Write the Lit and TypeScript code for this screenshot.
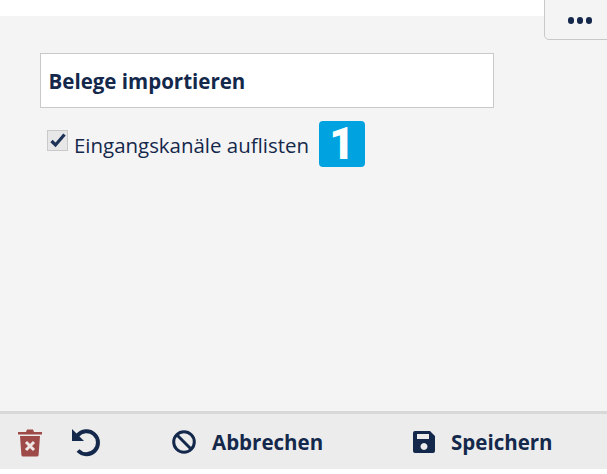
import { LitElement, html, css } from "lit";
import { customElement } from "lit/decorators.js";

@customElement("app-root")
export class AppRoot extends LitElement {
  static styles = css`
    :host {
      display: flex;
      flex-direction: column;
      width: 607px;
      height: 474px;
      overflow: hidden;
      background: #fff;
      font-family: "Open Sans", "Noto Sans", sans-serif;
      color: #14284b;
      position: relative;
    }
    .top { height: 16px; flex: none; background: #fff; }
    .main {
      flex: 1;
      background: #f4f4f4;
      padding: 37px 0 0 40px;
      display: flex;
      flex-direction: column;
      align-items: flex-start;
    }
    .more {
      position: absolute;
      top: -6px;
      left: 543.5px;
      width: 70px;
      height: 46px;
      box-sizing: border-box;
      border: 1.5px solid #c8c8c8;
      border-radius: 5px;
      background: #f4f4f4;
      display: flex;
      align-items: center;
      gap: 2.5px;
      padding-top: 7px;
      padding-left: 23px;
    }
    .more i { width: 6.500px; height: 6.500px; border-radius: 50%; background: #14284b; }
    .title {
      box-sizing: border-box;
      width: 454px;
      height: 55px;
      background: #fff;
      border: 1.5px solid #c9c9c9;
      padding-left: 7.5px;
      padding-top: 1px;
      display: flex;
      align-items: center;
      font-size: 20.500px;
      font-weight: 700;
    }
    .row {
      display: flex;
      align-items: center;
      margin-top: 13px;
      margin-left: 7px;
      height: 46px;
    }
    .check {
      box-sizing: border-box;
      width: 21px;
      height: 21px;
      background: #e7e7e7;
      border: 1.5px solid #c9c9c9;
      display: flex;
      align-items: center;
      justify-content: center;
      margin-top: -8px;
    }
    .check svg { width: 16px; height: 16px; }
    .label { margin-left: 6px; padding-top: 2px; font-size: 20.450px; }
    .badge {
      margin-left: 10px;
      width: 46px;
      height: 46px;
      border-radius: 4px;
      background: #00a2e0;
      color: #fff;
      font-family: Roboto, "Liberation Sans", sans-serif;
      font-weight: 900;
      font-size: 44px;
      line-height: 46px;
      text-align: center;
    }
    .footer {
      flex: none;
      height: 58px;
      margin-bottom: 5px;
      box-sizing: border-box;
      background: #ececec;
      border-top: 3px solid #d8d8d8;
      display: grid;
      grid-template-columns: 54px 93px 240px auto;
      align-items: center;
      padding-left: 17px;
    }
    .btn {
      display: flex;
      align-items: center;
      font-size: 20.500px;
      font-weight: 700;
    }
    .btn.cancel { margin-left: 8px; gap: 16px; }
    .btn.save { margin-left: 8px; gap: 15px; }
    .btn svg { display: block; }
  `;

  render() {
    return html`
      <div class="top"></div>
      <div class="more"><i></i><i></i><i></i></div>
      <div class="main">
        <div class="title">Belege importieren</div>
        <div class="row">
          <span class="check">
            <svg viewBox="0 0 16 16"><path d="M1.500 9l4 4L14.500 2.500" fill="none" stroke="#1c3357" stroke-width="3.200"/></svg>
          </span>
          <span class="label">Eingangskanäle auflisten</span>
          <span class="badge">1</span>
        </div>
      </div>
      <div class="footer">
        <svg width="26" height="30" viewBox="0 0 26 30">
          <path fill="#9e4a48" d="M1 5h8l1-2.500h6L17 5h8v2.500H1zM3 9h20l-1.400 19a1.800 1.800 0 0 1-1.800 1.600H6.200a1.800 1.800 0 0 1-1.800-1.600z"/>
          <path stroke="#f0e6e4" stroke-width="3" d="M9 15l8 8M17 15l-8 8"/>
        </svg>
        <svg width="30" height="30" viewBox="0 0 30 30">
          <path fill="none" stroke="#14284b" stroke-width="4" d="M6.500 8.500A11.500 11.500 0 1 1 7 23.500"/>
          <path fill="#14284b" d="M1 2v12h12z"/>
        </svg>
        <div class="btn cancel">
          <svg width="24" height="24" viewBox="0 0 24 24">
            <circle cx="12" cy="12" r="10.300" fill="none" stroke="#14284b" stroke-width="3"/>
            <path stroke="#14284b" stroke-width="3" d="M5 5l14 14"/>
          </svg>
          Abbrechen
        </div>
        <div class="btn save">
          <svg width="24" height="24" viewBox="0 0 24 24">
            <path fill="#14284b" fill-rule="evenodd" d="M3 1h15l5 5v15a2 2 0 0 1-2 2H3a2 2 0 0 1-2-2V3a2 2 0 0 1 2-2zM5 4v5h12V4zM12 13a3.500 3.500 0 1 0 .001 0z"/>
          </svg>
          Speichern
        </div>
      </div>
    `;
  }
}
